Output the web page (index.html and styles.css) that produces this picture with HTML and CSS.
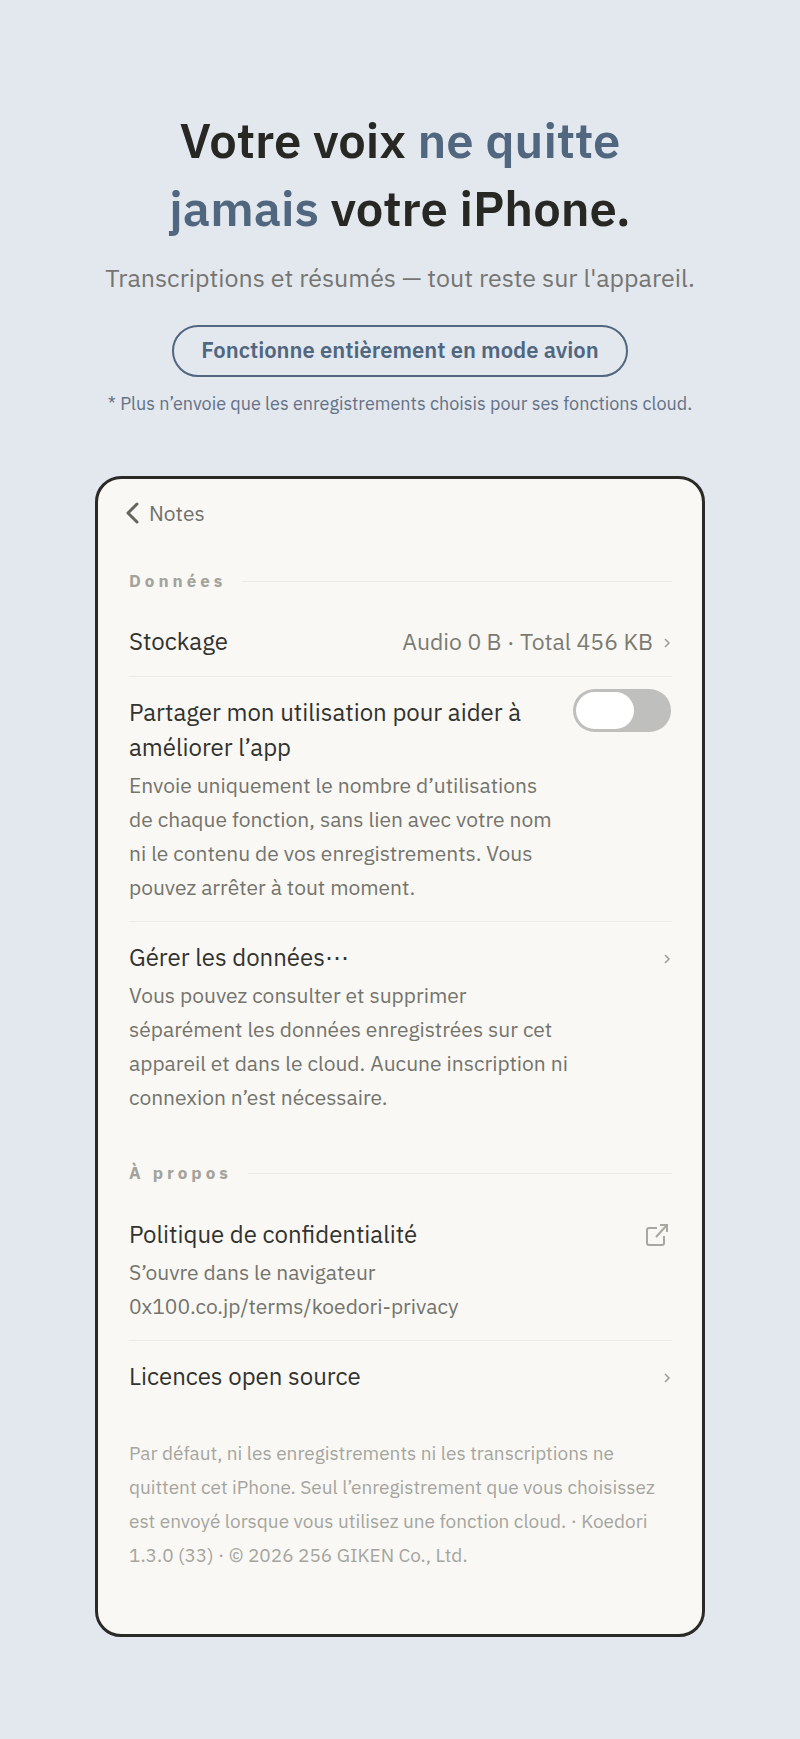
FILE: index.html
```html
<!DOCTYPE html>
<html lang="fr">
<head>
<meta charset="utf-8">
<meta name="viewport" content="width=device-width, initial-scale=1">
<title>Koedori – Données</title>
<link rel="stylesheet" href="styles.css">
</head>
<body>
<header class="hero">
  <h1 class="hero-title">Votre voix <em>ne quitte<br>jamais</em> votre iPhone.</h1>
  <p class="hero-subtitle">Transcriptions et résumés — tout reste sur l'appareil.</p>
  <p class="badge">Fonctionne entièrement en mode avion</p>
  <p class="hero-note">* Plus n’envoie que les enregistrements choisis pour ses fonctions cloud.</p>
</header>
<main class="card">
  <nav>
    <a class="back" href="#notes"><svg class="back-icon" viewBox="0 0 14 22" aria-hidden="true"><path d="M12 2 3 11l9 9"/></svg>Notes</a>
  </nav>
  <section>
    <h2 class="section-title">Données</h2>
    <button class="row" type="button">
      <span class="row-title">Stockage</span>
      <span class="row-value">Audio 0 B · Total 456 KB</span>
      <svg class="chevron" viewBox="0 0 6 10" aria-hidden="true"><path d="m1 1 4 4-4 4"/></svg>
    </button>
    <div class="row">
      <span class="row-text">
        <label class="row-title" for="share">Partager mon utilisation pour aider à améliorer l’app</label>
        <span class="row-desc" id="share-desc">Envoie uniquement le nombre d’utilisations de chaque fonction, sans lien avec votre nom ni le contenu de vos enregistrements. Vous pouvez arrêter à tout moment.</span>
      </span>
      <input class="toggle" type="checkbox" role="switch" id="share" aria-describedby="share-desc">
    </div>
    <button class="row" type="button">
      <span class="row-text">
        <span class="row-title">Gérer les données⋯</span>
        <span class="row-desc">Vous pouvez consulter et supprimer séparément les données enregistrées sur cet appareil et dans le cloud. Aucune inscription ni connexion n’est nécessaire.</span>
      </span>
      <svg class="chevron" viewBox="0 0 6 10" aria-hidden="true"><path d="m1 1 4 4-4 4"/></svg>
    </button>
  </section>
  <section class="about">
    <h2 class="section-title">À propos</h2>
    <a class="row" href="#privacy">
      <span class="row-text">
        <span class="row-title">Politique de confidentialité</span>
        <span class="row-desc">S’ouvre dans le navigateur<br>0x100.co.jp/terms/koedori-privacy</span>
      </span>
      <svg class="external" viewBox="0 0 24 24" aria-hidden="true"><path d="M12 5H4a2 2 0 0 0-2 2v13a2 2 0 0 0 2 2h13a2 2 0 0 0 2-2v-7M11 14 22 2M15 2h7v7"/></svg>
    </a>
    <button class="row" type="button">
      <span class="row-title">Licences open source</span>
      <svg class="chevron" viewBox="0 0 6 10" aria-hidden="true"><path d="m1 1 4 4-4 4"/></svg>
    </button>
  </section>
  <footer class="card-footer">Par défaut, ni les enregistrements ni les transcriptions ne quittent cet iPhone. Seul l’enregistrement que vous choisissez est envoyé lorsque vous utilisez une fonction cloud. · Koedori 1.3.0 (33) · © 2026 256 GIKEN Co., Ltd.</footer>
</main>
</body>
</html>
```
FILE: styles.css
```css
* {
  box-sizing: border-box;
}

body {
  margin: 0;
  padding: 106px 95px 102px;
  background: #e3e7ee;
  color: #2c2c28;
  font-family: "IBM Plex Sans", Roboto, "Liberation Sans", sans-serif;
}

h1, h2, p {
  margin: 0;
}

.hero {
  display: flex;
  flex-direction: column;
  align-items: center;
  text-align: center;
}

.hero-title {
  font-size: 49px;
  line-height: 68px;
  font-weight: 600;
  color: #272724;
}

.hero-title em {
  font-style: normal;
  color: #50677f;
}

.hero-subtitle {
  margin-top: 18px;
  font-size: 25px;
  line-height: 36px;
  font-weight: 400;
  color: #757572;
}

.badge {
  margin-top: 29px;
  padding: 0 27px 2px;
  border: 2px solid #50677f;
  border-radius: 26px;
  font-size: 22px;
  line-height: 46px;
  font-weight: 600;
  color: #50677f;
}

.hero-note {
  margin-top: 13px;
  font-size: 18px;
  line-height: 28px;
  color: #637286;
}

.card {
  margin-top: 58px;
  padding: 20px 30px 62px 31px;
  border: 3px solid #2a2a27;
  border-radius: 26px;
  background: #f9f8f4;
}

.back {
  display: inline-flex;
  align-items: center;
  gap: 10px;
  margin-left: -4px;
  font-size: 21px;
  line-height: 28px;
  color: #70706b;
  text-decoration: none;
}

.back-icon {
  width: 14px;
  height: 22px;
  fill: none;
  stroke: #66665f;
  stroke-width: 3;
  stroke-linecap: round;
  stroke-linejoin: round;
}

.section-title {
  display: flex;
  align-items: center;
  gap: 16px;
  margin: 41px 0 13px;
  font-size: 17px;
  line-height: 24px;
  font-weight: 700;
  letter-spacing: 4px;
  color: #a3a39c;
}

.section-title::after {
  content: "";
  flex: 1;
  height: 1px;
  background: #ecebe6;
}

.about .section-title {
  margin: 30px 0 14px;
}

.row {
  display: flex;
  align-items: flex-start;
  width: 100%;
  padding: 18px 0 17px;
  border: 0;
  background: none;
  font: inherit;
  color: inherit;
  text-align: left;
  text-decoration: none;
}

.row + .row {
  border-top: 1px solid #ecebe6;
}

.row-text {
  display: flex;
  flex-direction: column;
  gap: 3px;
  width: 444px;
  min-width: 0;
}

.row-title {
  font-size: 24px;
  line-height: 35px;
  color: #32322e;
}

.row-desc {
  font-size: 21px;
  line-height: 34px;
  color: #74746d;
}

.row-value {
  margin-left: auto;
  font-size: 23px;
  line-height: 35px;
  color: #7b7b73;
}

.chevron {
  flex: none;
  width: 6px;
  height: 10px;
  margin: 14px 2px 0 auto;
  fill: none;
  stroke: #9a9a93;
  stroke-width: 1.5;
}

.row-value + .chevron {
  margin-left: 11px;
}

.external {
  flex: none;
  width: 24px;
  height: 24px;
  margin: 6px 3px 0 auto;
  fill: none;
  stroke: #a8a8a1;
  stroke-width: 2;
}

.toggle {
  appearance: none;
  flex: none;
  display: flex;
  width: 98px;
  height: 43px;
  margin: -6px 1px 0 14px;
  padding: 3px;
  border-radius: 22px;
  background: #bfbfbe;
}

.toggle::before {
  content: "";
  width: 58px;
  border-radius: 19px;
  background: #fff;
}

.toggle:checked {
  justify-content: flex-end;
  background: #50677f;
}

.card-footer {
  margin-top: 25px;
  font-size: 19px;
  line-height: 34px;
  color: #a5a59f;
}
```
